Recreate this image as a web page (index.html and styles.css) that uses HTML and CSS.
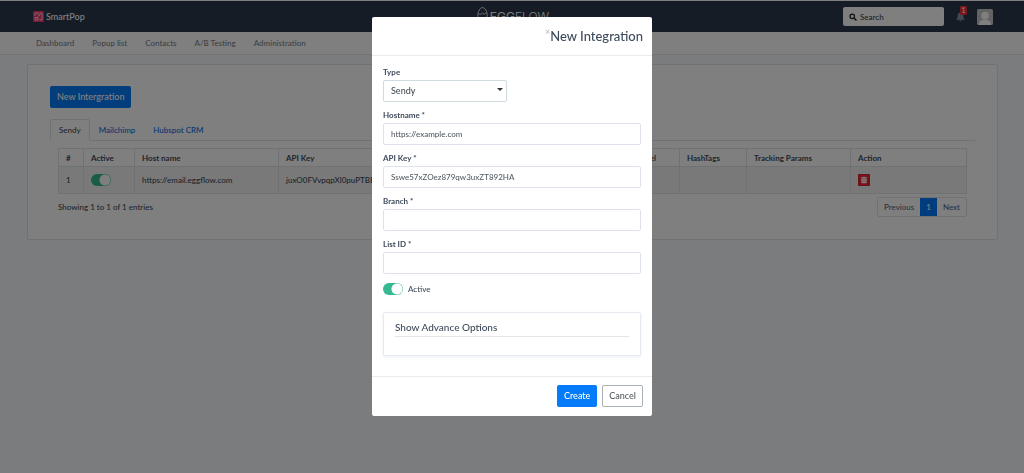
FILE: index.html
```
<!DOCTYPE html>
<html lang="en">
<head>
    <meta charset="UTF-8">
    <meta name="viewport" content="width=device-width, initial-scale=1.0">
    <title>SmartPop - Integrations</title>
    <link rel="stylesheet" href="styles.css">
</head>
<body>
    <header class="topbar">
        <a class="brand" href="#">
            <svg class="brand-icon" viewBox="0 0 22 22">
                <rect width="22" height="22" rx="2" fill="#f0346b"/>
                <path d="M4 10V4h7M13 4h5v14h-5M4 13v5h6v-5zM11 11l4-4" fill="none" stroke="#fff" stroke-width="1.500"/>
                <circle cx="11" cy="7" r="1.500" fill="#fff"/>
            </svg>
            SmartPop
        </a>
        <a class="logo" href="#">
            <svg class="logo-egg" viewBox="0 0 20 28">
                <path d="M10 1.500C5 1.500 1.500 9 1.500 15.500C1.500 21 5 25 10 25s8.500-4 8.500-9.500C18.500 9 15 1.500 10 1.500z" fill="none" stroke="#fff" stroke-width="1.500"/>
                <path d="M2 12c3 3 6 2 8-1 2 3 5 3 7-1" fill="none" stroke="#fff" stroke-width="1.500"/>
            </svg>
            <span><b>EGG</b>FLOW</span>
        </a>
        <div class="tools">
            <label class="search">
                <svg viewBox="0 0 16 16"><circle cx="6.500" cy="6.500" r="4.500" fill="none" stroke="#222" stroke-width="2.500"/><path d="M10 10l5 5" stroke="#222" stroke-width="3"/></svg>
                <input type="text" placeholder="Search" aria-label="Search">
            </label>
            <button class="bell" aria-label="Notifications">
                <svg viewBox="0 0 16 18"><path d="M8 1c-3.500 0-5 2.500-5 5.500C3 10.500 2 12 0 14h16c-2-2-3-3.500-3-7.500C13 3.500 11.500 1 8 1zM6 15a2 2 0 0 0 4 0z" fill="#8793a8"/></svg>
                <span class="count">1</span>
            </button>
            <svg class="avatar" viewBox="0 0 16 16"><rect width="16" height="16" rx="1.500" fill="#c6c6c6"/><circle cx="8" cy="6.500" r="3.800" fill="#fff"/><path d="M2 16c0-4 3-5.500 6-5.500s6 1.500 6 5.500z" fill="#fff"/></svg>
        </div>
    </header>

    <nav class="menu">
        <a href="#">Dashboard</a>
        <a href="#">Popup list</a>
        <a href="#">Contacts</a>
        <a href="#">A/B Testing</a>
        <a href="#">Administration</a>
    </nav>

    <main class="panel">
        <button class="btn btn-primary">New Intergration</button>
        <div class="tabs">
            <a class="tab active" href="#">Sendy</a>
            <a class="tab" href="#">Mailchimp</a>
            <a class="tab" href="#">Hubspot CRM</a>
        </div>
        <div class="tab-content">
            <table class="grid">
                <colgroup>
                    <col class="col-num"><col class="col-active"><col class="col-host"><col class="col-key"><col class="col-branch"><col class="col-label"><col class="col-tags"><col class="col-params"><col class="col-action">
                </colgroup>
                <thead>
                    <tr>
                        <th>#</th>
                        <th>Active</th>
                        <th>Host name</th>
                        <th>API Key</th>
                        <th>Branch</th>
                        <th>Label</th>
                        <th>HashTags</th>
                        <th>Tracking Params</th>
                        <th>Action</th>
                    </tr>
                </thead>
                <tbody>
                    <tr>
                        <td>1</td>
                        <td><input class="switch" type="checkbox" aria-label="Active" checked></td>
                        <td>https://email.eggflow.com</td>
                        <td>juxO0FVvpqpXl0puPTBE</td>
                        <td></td>
                        <td></td>
                        <td></td>
                        <td></td>
                        <td>
                            <button class="delete" aria-label="Delete">
                                <svg viewBox="0 0 12 12"><path d="M1 2h3l1-1h2l1 1h3v1.500H1zM2 4h8v7H2z" fill="#fff"/><path d="M4.500 5.500v4M7.500 5.500v4" stroke="#e5222f" stroke-width=".7"/></svg>
                            </button>
                        </td>
                    </tr>
                </tbody>
            </table>
            <div class="grid-footer">
                <span>Showing 1 to 1 of 1 entries</span>
                <div class="pages">
                    <a href="#">Previous</a>
                    <a class="current" href="#">1</a>
                    <a href="#">Next</a>
                </div>
            </div>
        </div>
    </main>

    <div class="overlay">
        <form class="modal" role="dialog" aria-labelledby="modal-title">
            <div class="modal-header">
                <button type="button" class="close" aria-label="Close">×</button>
                <h2 id="modal-title">New Integration</h2>
            </div>
            <div class="modal-body">
                <div class="field">
                    <label for="type">Type</label>
                    <div class="select-wrap">
                        <select id="type">
                            <option>Sendy</option>
                            <option>Mailchimp</option>
                            <option>Hubspot CRM</option>
                        </select>
                    </div>
                </div>
                <div class="field">
                    <label for="hostname">Hostname *</label>
                    <input type="text" id="hostname" placeholder="https://example.com">
                </div>
                <div class="field">
                    <label for="apikey">API Key *</label>
                    <input type="text" id="apikey" placeholder="Sswe57xZOez879qw3uxZT892HA">
                </div>
                <div class="field">
                    <label for="branch">Branch *</label>
                    <input type="text" id="branch">
                </div>
                <div class="field">
                    <label for="list">List ID *</label>
                    <input type="text" id="list">
                </div>
                <label class="toggle"><input class="switch" type="checkbox" checked> Active</label>
                <div class="advance">
                    <h3>Show Advance Options</h3>
                </div>
            </div>
            <div class="modal-footer">
                <button type="button" class="btn btn-primary">Create</button>
                <button type="button" class="btn btn-outline">Cancel</button>
            </div>
        </form>
    </div>
</body>
</html>
```
FILE: styles.css
```
* {
    box-sizing: border-box;
}

body {
    margin: 0;
    min-height: 100vh;
    border-top: 1px solid #fff;
    background: #f6f8fc;
    color: #3e4b5b;
    font-family: Lato, "Open Sans", sans-serif;
    font-size: 8px;
    font-weight: 500;
    line-height: 12px;
}

a {
    color: #0a6ee0;
    text-decoration: none;
}

button, input, select {
    font: inherit;
}

.topbar {
    display: grid;
    grid-template-columns: 1fr auto 1fr;
    align-items: center;
    height: 31px;
    padding: 0 31px 0 33px;
    background: #2c384a;
}

.brand {
    display: flex;
    align-items: center;
    gap: 2px;
    color: #fff;
    font-size: 9px;
    font-weight: 500;
}

.brand-icon {
    width: 11px;
    height: 11px;
}

.logo {
    display: flex;
    align-items: center;
    gap: 2px;
    color: #fff;
    font-family: Inter, sans-serif;
    font-size: 12px;
    font-weight: 300;
    line-height: 20px;
}

.logo-egg {
    width: 11px;
    height: 17px;
    margin-bottom: 5px;
}

.tools {
    display: flex;
    align-items: center;
    justify-content: flex-end;
    gap: 12px;
}

.search {
    display: flex;
    align-items: center;
    gap: 3px;
    width: 101px;
    height: 19px;
    padding: 0 6px;
    border-radius: 2px;
    background: #fff;
}

.search svg {
    flex: none;
    width: 8px;
    height: 8px;
}

.search input {
    width: 100%;
    padding: 0;
    border: 0;
    background: none;
}

.search input::placeholder {
    color: #444;
}

.bell {
    position: relative;
    width: 9px;
    height: 10px;
    padding: 0;
    border: 0;
    background: none;
}

.bell svg {
    display: block;
    width: 9px;
    height: 10px;
}

.count {
    position: absolute;
    top: -6px;
    right: -2px;
    width: 7px;
    height: 9px;
    border-radius: 1px;
    background: #e8303a;
    color: #fff;
    font-size: 7px;
    line-height: 9px;
    text-align: center;
}

.avatar {
    width: 16px;
    height: 16px;
}

.menu {
    display: flex;
    gap: 18px;
    padding: 5px 36px;
    border-bottom: 1px solid #e3e7ee;
    background: #fff;
}

.menu a {
    color: #7c8490;
}

.panel {
    margin: 9px 26px 0 27px;
    padding: 21px 22px 22px;
    border: 1px solid #dfe3e9;
    border-radius: 2px;
    background: #fff;
}

.btn {
    height: 22px;
    padding: 0 6px;
    border: 1px solid transparent;
    border-radius: 2px;
    font-size: 9px;
}

.btn-primary {
    background: #047bf8;
    color: #fff;
}

.btn-outline {
    border-color: #a9b0b8;
    background: #fff;
    color: #555b62;
}

.tabs {
    display: flex;
    margin-top: 11px;
    border-bottom: 1px solid #dee2e6;
}

.tab {
    margin-bottom: -1px;
    padding: 4px 8px;
    border: 1px solid transparent;
}

.tab.active {
    border-color: #dee2e6 #dee2e6 #fff;
    border-radius: 2px 2px 0 0;
    background: #fff;
    color: #495057;
}

.tab-content {
    padding: 7px 8px 0;
}

.grid {
    width: 100%;
    border-collapse: collapse;
    table-layout: fixed;
}

.col-num { width: 25px; }
.col-active { width: 51px; }
.col-host { width: 144px; }
.col-key { width: 230px; }
.col-label { width: 50px; }
.col-tags { width: 67px; }
.col-params { width: 104px; }
.col-action { width: 116px; }

.grid th,
.grid td {
    padding: 2px 7px;
    border: 1px solid #dee2e6;
    text-align: left;
    white-space: nowrap;
}

.grid th {
    height: 18px;
}

.grid td {
    height: 27px;
    background: #f2f2f2;
}

.delete {
    display: grid;
    place-items: center;
    width: 12px;
    height: 12px;
    padding: 0;
    border: 0;
    border-radius: 1px;
    background: #e5222f;
}

.delete svg {
    width: 8px;
    height: 8px;
}

.switch {
    appearance: none;
    display: block;
    width: 20px;
    height: 12px;
    margin: 0;
    border-radius: 6px;
    background: radial-gradient(circle at 14px 6px, #fff 5px, #36b892 6px);
}

.grid-footer {
    display: flex;
    justify-content: space-between;
    align-items: center;
    padding-top: 3px;
}

.pages {
    display: flex;
    border: 1px solid #dee2e6;
    border-radius: 2px;
}

.pages a {
    padding: 3px 6px;
    color: #5f676e;
}

.pages .current {
    background: #007bff;
    color: #fff;
}

.overlay {
    position: fixed;
    inset: 0;
    padding: 17px 16px;
    background: rgba(0, 0, 0, 0.5);
    overflow: hidden;
}

.modal {
    max-width: 280px;
    margin: 0 auto;
    border-radius: 2px;
    background: #fff;
}

.modal-header {
    display: flex;
    justify-content: flex-end;
    padding: 10px 9px;
    border-bottom: 1px solid #e9ecef;
}

.close {
    align-self: flex-start;
    padding: 0;
    border: 0;
    background: none;
    color: #bbb;
    font-size: 9px;
    line-height: 9px;
}

.modal-header h2 {
    margin: 0;
    font-size: 13px;
    font-weight: 500;
    line-height: 18px;
}

.modal-body {
    padding: 11px 11px 20px;
}

.field {
    margin-bottom: 8px;
}

.field label {
    display: block;
    margin-bottom: 2px;
    font-weight: bold;
    line-height: 11px;
}

.field input,
.field select {
    display: block;
    width: 100%;
    height: 22px;
    padding: 0 7px;
    border: 1px solid #dde2ec;
    border-radius: 2px;
    background: #fff;
    color: #495057;
}

.select-wrap {
    position: relative;
    width: 48%;
}

.field select {
    appearance: none;
    padding: 0 7px;
    border-color: #cfdcdf;
    font-size: 9px;
}

.select-wrap::after {
    content: "";
    position: absolute;
    top: 8px;
    right: 4px;
    border: 3px solid transparent;
    border-top-color: #333;
    border-bottom: 0;
    pointer-events: none;
}

.field input::placeholder {
    color: #555d63;
}

.toggle {
    display: flex;
    align-items: center;
    gap: 5px;
    padding-top: 1px;
}

.advance {
    margin-top: 17px;
    padding: 8px 11px 18px;
    border: 1px solid #e6e9f0;
    border-radius: 2px;
    box-shadow: 0 1px 3px rgba(69, 101, 173, 0.1);
}

.advance h3 {
    margin: 0;
    padding-bottom: 3px;
    border-bottom: 1px solid #e5e5e5;
    font-size: 10px;
    font-weight: 500;
    line-height: 12px;
}

.modal-footer {
    display: flex;
    justify-content: flex-end;
    gap: 5px;
    padding: 8px 9px 9px;
    border-top: 1px solid #e9ecef;
}
```
